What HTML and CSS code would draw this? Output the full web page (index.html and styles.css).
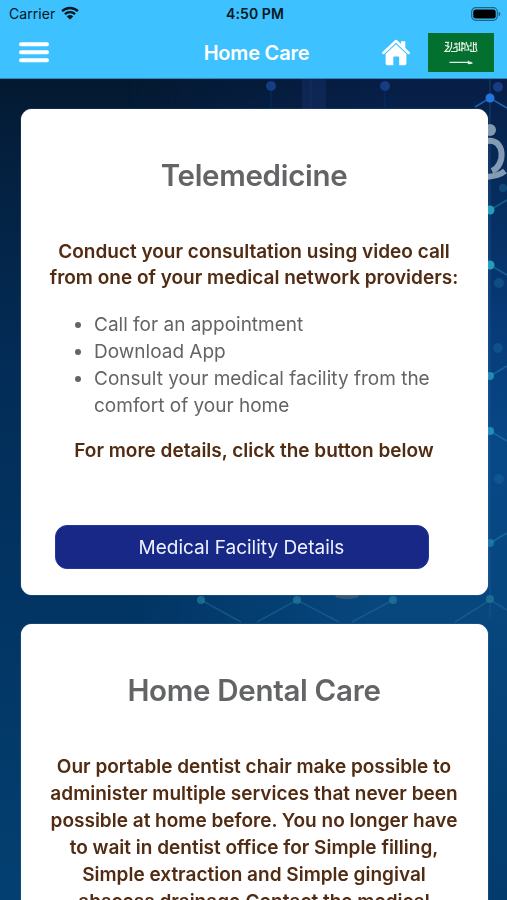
FILE: index.html
```html
<!DOCTYPE html>
<html lang="en">
<head>
<meta charset="utf-8">
<title>Home Care</title>
<link rel="stylesheet" href="styles.css">
</head>
<body>
<header class="topbar">
  <div class="status">
    <div class="carrier">Carrier
      <svg class="wifi" viewBox="0 0 18 14"><path d="M1.1 5.2a11.4 11.4 0 0 1 15.8 0M3.9 8.1a7.4 7.4 0 0 1 10.2 0" fill="none" stroke="#071620" stroke-width="2.3"/><path d="M9 13.6 5.8 10.4a4.6 4.6 0 0 1 6.4 0z" fill="#071620"/></svg>
    </div>
    <div class="time">4:50 PM</div>
    <svg class="battery" viewBox="0 0 30 14"><rect x=".7" y=".7" width="25.6" height="12.6" rx="4" fill="none" stroke="#1f6585" stroke-width="1.2"/><rect x="2.3" y="2.4" width="22.4" height="9.2" rx="2.3" fill="#000"/><path d="M27.6 4.8q1.8.5 1.8 2.2t-1.8 2.2z" fill="#1f6585"/></svg>
  </div>
  <nav class="nav">
    <svg class="menu" viewBox="0 0 30 21"><path d="M2 2.3h26M2 10.3h26M2 18.3h26" stroke="#fff" stroke-width="4" stroke-linecap="round"/></svg>
    <h1 class="heading">Home Care</h1>
    <div class="actions">
      <svg class="home" viewBox="0 0 28 27"><path d="M1.3 14 14 2l12.7 12" fill="none" stroke="#fff" stroke-width="2.5" stroke-linecap="round" stroke-linejoin="round"/><path d="M19 2.2h4.3v8L19 6z" fill="#fff"/><path d="M3.6 15 14 5.3 24.4 15v9.2a2 2 0 0 1-2 2h-5.2v-7.6q0-1-1-1h-3.9q-1 0-1 1v7.6H5.6a2 2 0 0 1-2-2z" fill="#fff"/></svg>
      <svg class="flag" viewBox="0 0 66 39"><path d="M0 0h66v39H0z" fill="#04702f"/><g fill="none" stroke="#e2f0e6" stroke-width="1.15"><path d="M17 9.3h4M17 12.2l4 1.5-4 4.6h5M20 9v5M23.5 9v5l-2 4M25 15.5l4-2v5M28 9.5v3M26 11h5M31.5 9v9M34 18.5v-9l3 1.5v4l-4 1M38 9l3 8h-5M39 13h4V9M43 16v2.5M45.5 9v9.5M48 9v6l1 3.5M42 18.5h6M23 18.5h6M29 17h5M46 11.5h3M33 11h4"/><path d="M21.5 29.3h22M40.5 27.8v2.8l4-.5" stroke-width="1.3"/></g></svg>
    </div>
  </nav>
</header>
<main class="content">
  <svg class="backdrop" viewBox="0 0 507 821" preserveAspectRatio="none">
    <defs>
      <linearGradient id="deep" x2="0" y2="1"><stop offset="0" stop-color="#041930"/><stop offset=".1" stop-color="#04203f"/><stop offset=".35" stop-color="#032c57"/><stop offset=".65" stop-color="#023564"/><stop offset="1" stop-color="#034071"/></linearGradient>
      <linearGradient id="glow" x2="0" y2="1"><stop offset="0" stop-color="#071d44"/><stop offset=".12" stop-color="#062b5b"/><stop offset=".3" stop-color="#073b78"/><stop offset=".45" stop-color="#074887"/><stop offset=".65" stop-color="#07477e"/><stop offset="1" stop-color="#033b6c"/></linearGradient>
      <linearGradient id="fade"><stop offset=".25" stop-color="#000"/><stop offset=".75" stop-color="#fff"/></linearGradient>
      <mask id="side"><rect width="507" height="821" fill="url(#fade)"/></mask>
      <filter id="soft" x="-10%" y="-10%" width="120%" height="120%"><feGaussianBlur stdDeviation=".7"/></filter>
    </defs>
    <rect width="507" height="821" fill="url(#deep)"/>
    <rect width="507" height="821" fill="url(#glow)" mask="url(#side)"/>
    <g filter="url(#soft)">
      <path d="M302 0h24v30h-24z" fill="#0b2c5c" opacity=".65"/>
      <path d="M271 8v22M385 8v22M311 0v30" stroke="#123b76" opacity=".6"/>
      <g fill="#143e83"><circle cx="271" cy="7" r="5"/><circle cx="385" cy="7" r="5"/><circle cx="498" cy="8" r="5"/></g>
      <path d="M475 28l15-9 17 10" fill="none" stroke="#1c62b0" stroke-width="1.5"/>
      <path d="M490 0v540" stroke="#2460a0" opacity=".5"/>
      <circle cx="490" cy="19" r="4.5" fill="#2475df"/>
      <g fill="none" stroke="#1d7eac" stroke-width="2" opacity=".55"><path d="M490 131l17-10M490 186l17 10M490 297l17-10M490 352l17 10M490 464l17-10"/></g>
      <g fill="#259dbc"><circle cx="490" cy="131" r="4.5"/><circle cx="490" cy="186" r="4.5"/><circle cx="490" cy="297" r="4" opacity=".8"/><circle cx="490" cy="352" r="4" opacity=".8"/><circle cx="490" cy="464" r="4" opacity=".5"/></g>
      <g fill="#176b99" opacity=".45"><circle cx="499" cy="204" r="5"/><circle cx="498" cy="269" r="5"/><circle cx="499" cy="400" r="5"/><circle cx="503" cy="109" r="4"/></g>
      <g stroke="#9bb1c3" fill="none" opacity=".85"><path d="M487 62c18-3 19 24 5 30" stroke-width="6"/><path d="M486 98q13-1 19-6" stroke-width="6"/></g>
      <circle cx="490" cy="51" r="6" fill="#8298ac"/>
      <g fill="none" stroke="#216b94" stroke-width="1.5" opacity=".55"><path d="M201 521l40 22M257 543l40-22 42 22M352 543l41-22M455 543l35-22 17 10"/></g>
      <g fill="#24759a" opacity=".8"><circle cx="201" cy="521" r="4"/><circle cx="297" cy="521" r="4"/><circle cx="393" cy="521" r="4"/><circle cx="490" cy="520" r="4"/></g>
      <ellipse cx="347" cy="517" rx="12" ry="3" fill="#53656d" opacity=".6"/>
    </g>
  </svg>
  <section class="card tele">
    <h2 class="title">Telemedicine</h2>
    <p class="lead"><span class="l1">Conduct your consultation using video call</span><br><span class="l2">from one of your medical network providers:</span></p>
    <ul class="list">
      <li>Call for an appointment</li>
      <li>Download App</li>
      <li>Consult your medical facility from the comfort of your home</li>
    </ul>
    <p class="more">For more details, click the button below</p>
    <button class="button">Medical Facility Details</button>
  </section>
  <section class="card dental">
    <h2 class="title wide">Home Dental Care</h2>
    <p class="lead">Our portable dentist chair make possible to<br>administer multiple services that never been<br>possible at home before. You no longer have<br>to wait in dentist office for Simple filling,<br>Simple extraction and Simple gingival<br>abscess drainage.Contact the medical</p>
  </section>
</main>
</body>
</html>
```

FILE: styles.css
```css
* { box-sizing: border-box; }
body {
  margin: 0;
  height: 900px;
  overflow: hidden;
  font-family: Inter, "Liberation Sans", sans-serif;
  color: #626466;
}
h1, h2, p, ul { margin: 0; padding: 0; }
svg { display: block; flex: none; }
.topbar {
  height: 79px;
  background: #3ec1ff;
  border-bottom: 1px solid #2689bb;
  color: #071620;
}
.status {
  height: 27px;
  display: grid;
  grid-template-columns: 1fr auto 1fr;
  align-items: center;
  padding: 0 6px 0 9px;
  font-size: 14px;
}
.carrier { display: flex; gap: 6px; letter-spacing: .05px; }
.wifi { width: 18px; height: 14px; margin-top: 1px; }
.time { font-weight: 600; letter-spacing: .1px; }
.battery { width: 30px; height: 14px; justify-self: end; }
.nav {
  height: 51px;
  display: grid;
  grid-template-columns: 1fr auto 1fr;
  align-items: center;
  padding: 0 13px 0 19px;
}
.menu { width: 30px; height: 21px; }
.heading { color: #fff; font-size: 20px; line-height: 24px; font-weight: 600; letter-spacing: -.2px; }
.actions { display: flex; justify-content: flex-end; align-items: center; gap: 18px; }
.home { width: 28px; height: 27px; }
.flag { width: 66px; height: 39px; }
.content {
  position: relative;
  height: 821px;
  padding: 29.5px 19.5px 0 20.5px;
  overflow: hidden;
}
.backdrop { position: absolute; inset: 0; width: 100%; height: 100%; }
.card {
  position: relative;
  height: 486px;
  padding: 46px 20px 0;
  background: #fff;
  border-radius: 11px;
  box-shadow: 0 0 1px #a9d0f0;
}
.dental { margin-top: 29.5px; }
.title { font-size: 29.5px; line-height: 40px; font-weight: 600; text-align: center; letter-spacing: -.3px; }
.lead, .more {
  text-align: center;
  color: #512b12;
  font-size: 19px;
  line-height: 26.9px;
  font-weight: 600;
  white-space: nowrap;
}
.lead { margin-top: 44px; }
.list { margin-top: 19.5px; padding-left: 53.5px; font-size: 19px; line-height: 26.9px; }
.more { margin-top: 19px; }
.button {
  display: block;
  width: 374px;
  height: 44px;
  margin: 60px 0 0 14px;
  padding: 0;
  border: 1px solid #26379b;
  border-radius: 12px;
  background: #172887;
  color: #eef2ff;
  font: 400 19px Inter, sans-serif;
}
```
